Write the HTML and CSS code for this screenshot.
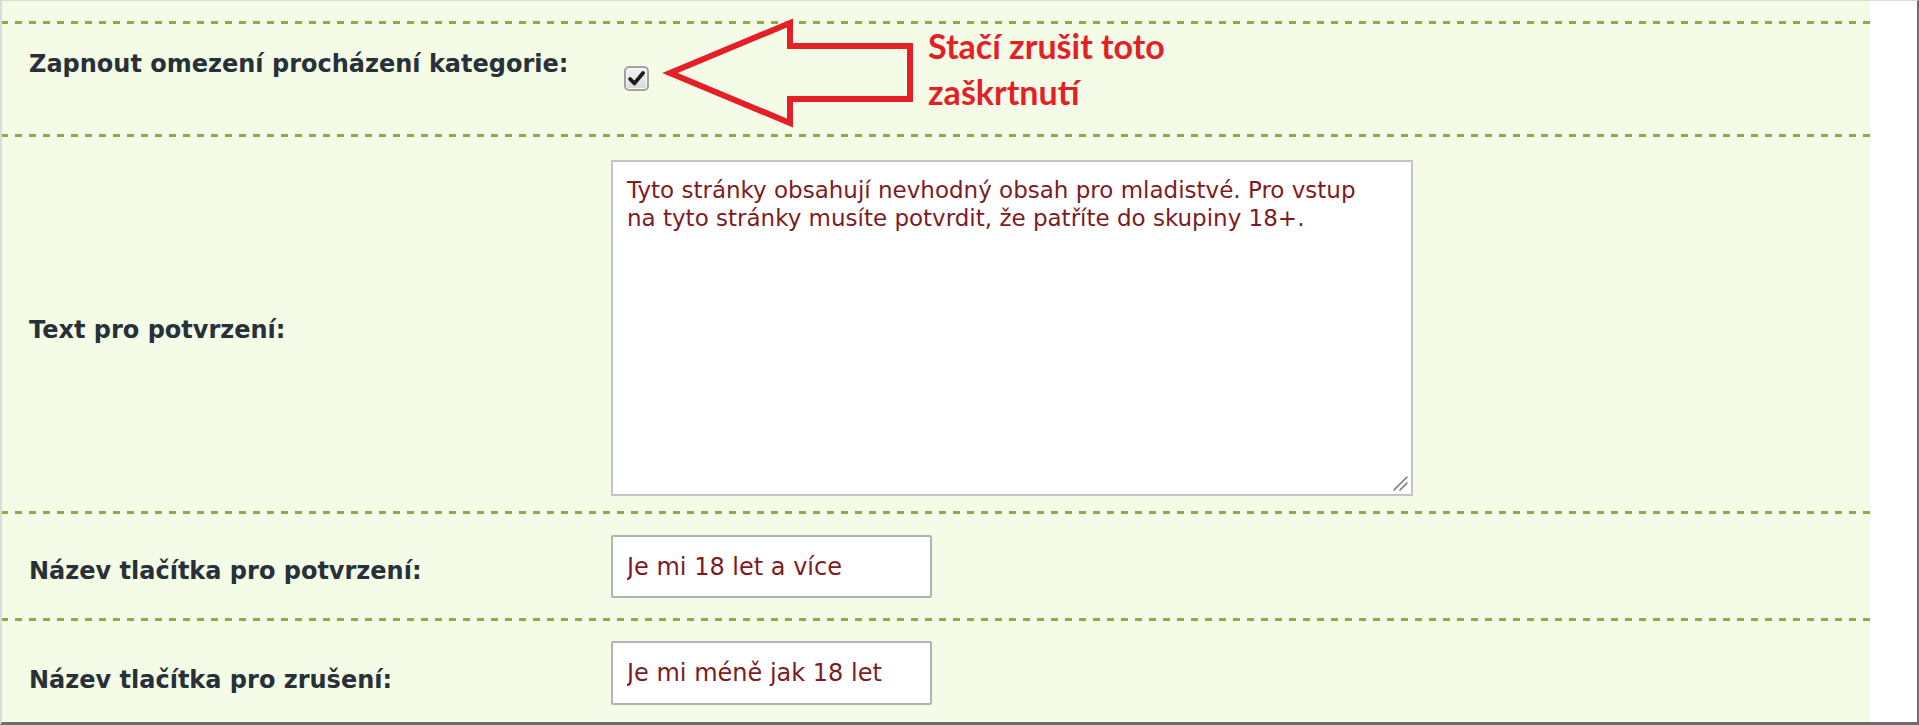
FILE: index.html
```html
<!DOCTYPE html>
<html lang="cs">
<head>
    <meta charset="UTF-8">
    <meta name="viewport" content="width=device-width, initial-scale=1.0">
    <title>Omezení procházení kategorie</title>
    <link rel="stylesheet" href="styles.css">
</head>
<body>
    <div class="frame">
        <form class="settings">
            <div class="row row-check">
                <label class="row-label" for="restrict">Zapnout omezení procházení kategorie:</label>
                <div class="row-field">
                    <span class="check" id="restrict" role="checkbox" aria-checked="true">
                        <svg viewBox="0 0 16 16" width="19" height="19">
                            <path d="M2.6 8.4 L6.3 12.1 L13.5 3.4" fill="none" stroke="#1c1c1c" stroke-width="3.2" stroke-linecap="round" stroke-linejoin="round"/>
                        </svg>
                    </span>
                </div>

                <!-- annotation -->
                <svg class="note-arrow" width="260" height="116" viewBox="0 0 260 116">
                    <polygon points="8,58 128,8 128,31 248,31 248,84 128,84 128,108" fill="none" stroke="#e41f26" stroke-width="6" stroke-linejoin="miter"/>
                </svg>
                <div class="note-text">Stačí zrušit toto<br>zaškrtnutí</div>
            </div>

            <div class="row row-text">
                <label class="row-label" for="confirmText">Text pro potvrzení:</label>
                <div class="row-field">
                    <div class="textarea-wrap">
                        <textarea id="confirmText" name="confirmText">Tyto stránky obsahují nevhodný obsah pro mladistvé. Pro vstup na tyto stránky musíte potvrdit, že patříte do skupiny 18+.</textarea>
                        <svg class="grip" width="16" height="16" viewBox="0 0 16 16">
                            <path d="M2 15 L15 2 M8 15 L15 8" stroke="#7a7a7a" stroke-width="1.6" stroke-linecap="round"/>
                        </svg>
                    </div>
                </div>
            </div>

            <div class="row row-input">
                <label class="row-label" for="okLabel">Název tlačítka pro potvrzení:</label>
                <div class="row-field">
                    <input type="text" id="okLabel" name="okLabel" value="Je mi 18 let a více">
                </div>
            </div>

            <div class="row row-input row-last">
                <label class="row-label" for="cancelLabel">Název tlačítka pro zrušení:</label>
                <div class="row-field">
                    <input type="text" id="cancelLabel" name="cancelLabel" value="Je mi méně jak 18 let">
                </div>
            </div>
        </form>
    </div>
</body>
</html>
```

FILE: styles.css
```css
html, body {
    margin: 0;
    padding: 0;
}
body {
    font-family: "DejaVu Sans", Verdana, sans-serif;
    background-color: white;
}
.frame {
    box-sizing: border-box;
    height: 725px;
    border-top: 1px solid #dcdcdc;
    border-left: 2px solid #dcdcdc;
    border-right: 2px solid #6e6e6e;
    border-bottom: 3px solid #6e6e6e;
    padding-right: 47px;
    background-color: white;
}
.settings {
    height: 100%;
    padding-top: 20px;
    box-sizing: border-box;
    background-color: #f4fce8;
}
.row {
    position: relative;
    display: grid;
    grid-template-columns: 582px auto;
    align-items: center;
    padding: 3px 0 0 27px;
    background-image: linear-gradient(to right, #8aad4c 50%, transparent 50%);
    background-size: 14px 3px;
    background-repeat: repeat-x;
    background-position: 13px 0;
}
.row-label {
    font-weight: bold;
    font-size: 24px;
    line-height: 28px;
    color: #283038;
}
.row-field {
    display: flex;
}

/* checkbox row */
.row-check {
    align-items: start;
}
.row-check .row-label {
    padding-top: 26px;
}
.row-check .row-field {
    padding: 42px 0 43px 13px;
}
.check {
    box-sizing: border-box;
    width: 25px;
    height: 25px;
    display: flex;
    align-items: center;
    justify-content: center;
    border: 2px solid #a2a2a2;
    border-radius: 5px;
    background: linear-gradient(#f4f4f4, #d8d8d8);
    box-shadow: inset 0 0 0 1px #fafafa;
}
.note-arrow {
    position: absolute;
    left: 660px;
    top: -6px;
}
.note-text {
    position: absolute;
    left: 926px;
    top: 2px;
    font-family: Lato, "Open Sans", sans-serif;
    font-weight: bold;
    font-size: 34px;
    line-height: 46px;
    color: #e41f26;
}

/* textarea row */
.row-text .row-label {
    padding-top: 12px;
}
.row-text .row-field {
    padding: 23px 0 15px;
}
.textarea-wrap {
    position: relative;
    display: flex;
}
textarea {
    box-sizing: border-box;
    width: 802px;
    height: 336px;
    padding: 14px 30px 14px 14px;
    border: 2px solid #c4c4c4;
    font-family: "DejaVu Sans", Verdana, sans-serif;
    font-size: 23px;
    line-height: 28px;
    color: #7e1b22;
    background-color: white;
    resize: none;
}
.grip {
    position: absolute;
    right: 5px;
    bottom: 5px;
}

/* text inputs */
.row-input .row-label {
    padding-top: 10px;
}
.row-input .row-field {
    padding: 21px 0 20px;
}
.row-last .row-label {
    padding-top: 17px;
}
.row-last .row-field {
    padding: 20px 0 17px;
}
input[type="text"] {
    box-sizing: border-box;
    width: 321px;
    height: 63px;
    padding: 0 14px;
    border: 2px solid #b2b2b2;
    border-radius: 2px;
    font-family: "DejaVu Sans", Verdana, sans-serif;
    font-size: 24px;
    color: #7e1b22;
    background-color: white;
}
.row-last input[type="text"] {
    height: 64px;
}
```
